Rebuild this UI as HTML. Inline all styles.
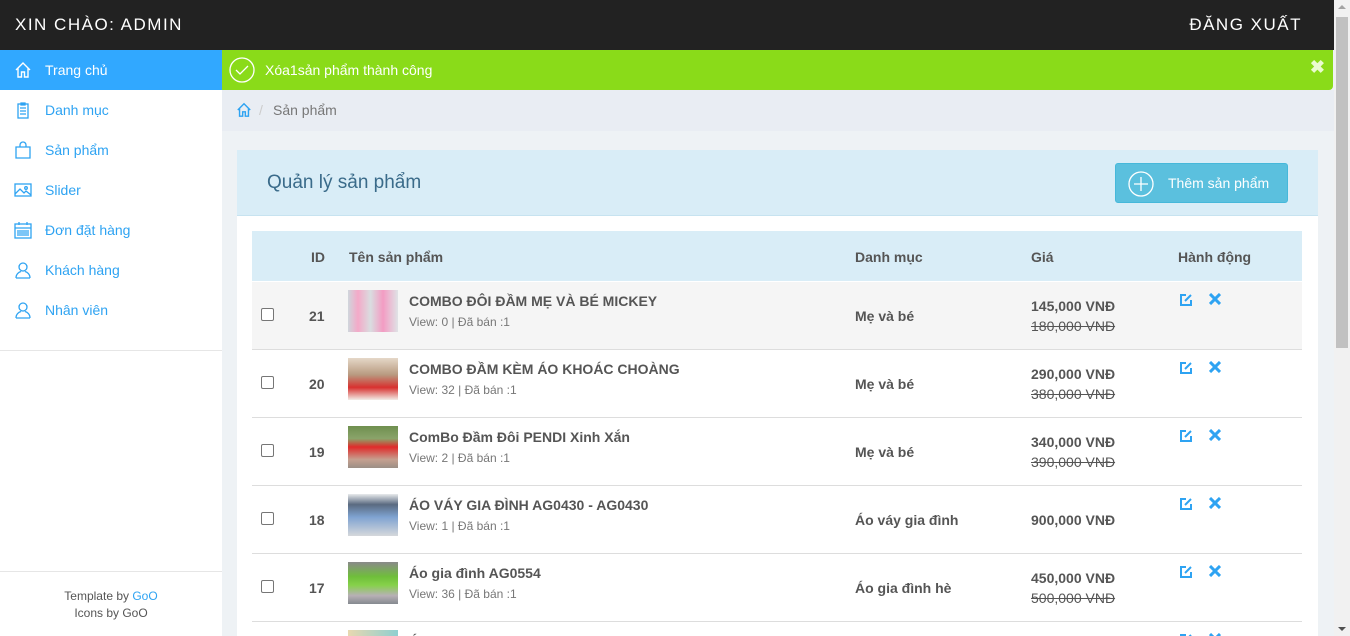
<!DOCTYPE html>
<html style="width:1350px;height:636px;overflow:hidden"><head><meta charset="utf-8">
<style>
*{box-sizing:border-box;margin:0;padding:0}
body{width:1350px;height:636px;overflow:hidden;font-family:"Liberation Sans",Arial,sans-serif;background:#eef2f5;position:relative;color:#555}
.top{position:absolute;left:0;top:0;width:1334px;height:50px;background:#222;color:#fff;font-size:17px;letter-spacing:1.5px}
.top .l{position:absolute;left:15px;top:15px}
.top .r{position:absolute;right:32px;top:15px}
.side{position:absolute;left:0;top:50px;width:222px;height:586px;background:#fff}
.side .it{height:40px;display:flex;align-items:center;padding-left:45px;color:#2ea3f2;font-size:14px;position:relative}
.side .it.act{background:#31a8ff;color:#fff}
.side .it svg{position:absolute;left:14px;top:11px}
.side .div{position:absolute;top:300px;left:0;width:222px;border-top:1px solid #e6e6e6}
.side .foot{position:absolute;top:521px;left:0;width:222px;border-top:1px solid #e6e6e6;text-align:center;font-size:12px;color:#555;padding-top:16px;line-height:17px}
.alert{position:absolute;left:222px;top:50px;width:1111px;height:40px;background:#8adb19;color:#fff;font-size:14px;border-radius:0 0 4px 0}
.bc{position:absolute;left:222px;top:90px;width:1112px;height:41px;background:#e9edf3;font-size:14px;color:#777}
.panel{position:absolute;left:237px;top:150px;width:1081px;height:486px;background:#fff}
.ph{height:66px;background:#d9edf7;border-bottom:1px solid #c7e3f0;position:relative}
.ph .t{position:absolute;left:30px;top:22px;font-size:19px;color:#3a6b8a}
.btn{position:absolute;left:878px;top:13px;width:173px;height:40px;background:#5bc0de;border:1px solid #46b8da;border-radius:3px;color:#fff;font-size:14px}
.th{position:absolute;left:252px;top:231px;width:1050px;height:50px;background:#d9edf7;font-weight:bold;font-size:14px;color:#555}
.row{position:absolute;left:252px;width:1050px;height:68px;border-bottom:1px solid #ddd;overflow:hidden}
.row .cb{position:absolute;left:9px;top:26px;width:13px;height:13px;border:1px solid #767676;border-radius:2px;background:#fff}
.row .id{position:absolute;left:57px;top:26px;font-weight:bold;font-size:14px}
.row .img{position:absolute;left:96px;top:8px;width:50px;height:42px}
.row .nm{position:absolute;left:157px;top:11px;font-weight:bold;font-size:14px}
.row .vw{position:absolute;left:157px;top:33px;font-size:12px;color:#777}
.row .cat{position:absolute;left:603px;top:26px;font-weight:bold;font-size:14px}
.row .p1{position:absolute;left:779px;top:16px;font-weight:bold;font-size:14px}
.row .p2{position:absolute;left:779px;top:36px;font-size:14px;text-decoration:line-through}
.row .p0{position:absolute;left:779px;top:26px;font-weight:bold;font-size:14px}
.row .ed{position:absolute;left:927px;top:11px}
.row .x{position:absolute;left:957px;top:11px}
.sb{position:absolute;left:1334px;top:0;width:16px;height:636px;background:#f1f1f1}
.sb .th2{position:absolute;left:2px;top:17px;width:12px;height:331px;background:#c1c1c1}
</style></head><body>
<div class="top"><span class="l">XIN CHÀO: ADMIN</span><span class="r">ĐĂNG XUẤT</span></div>
<div class="side">
<div class="it act"><svg width="18" height="18" viewBox="0 0 18 18" fill="none" stroke="#fff" stroke-width="1.4"><path d="M2 9L9 2l7 7M4 7.5V16h3.5v-5h3v5H14V7.5"/></svg>Trang chủ</div>
<div class="it"><svg width="18" height="18" viewBox="0 0 18 18" fill="none" stroke="#2ea3f2" stroke-width="1.3"><rect x="4" y="3" width="10" height="14"/><path d="M7 2h4v2H7zM6 7h6M6 10h6M6 13h6"/></svg>Danh mục</div>
<div class="it"><svg width="18" height="18" viewBox="0 0 18 18" fill="none" stroke="#2ea3f2" stroke-width="1.3"><path d="M2 6h14v11H2zM6 6V4a3 3 0 0 1 6 0v2"/></svg>Sản phẩm</div>
<div class="it"><svg width="18" height="18" viewBox="0 0 18 18" fill="none" stroke="#2ea3f2" stroke-width="1.3"><rect x="1" y="3" width="16" height="12"/><path d="M1 13l5-5 4 4 2-2 5 4"/><circle cx="12" cy="7" r="1.3"/></svg>Slider</div>
<div class="it"><svg width="18" height="18" viewBox="0 0 18 18" fill="none" stroke="#2ea3f2" stroke-width="1.3"><rect x="1" y="3" width="16" height="14"/><path d="M1 7h16M3 10h12M3 12h12M3 14h12M5 1v3M13 1v3"/></svg>Đơn đặt hàng</div>
<div class="it"><svg width="18" height="18" viewBox="0 0 18 18" fill="none" stroke="#2ea3f2" stroke-width="1.3"><circle cx="9" cy="6" r="4"/><path d="M2 17c0-4 3-6 5-6.5M16 17c0-4-3-6-5-6.5M2 17h14"/></svg>Khách hàng</div>
<div class="it"><svg width="18" height="18" viewBox="0 0 18 18" fill="none" stroke="#2ea3f2" stroke-width="1.3"><circle cx="9" cy="6" r="4"/><path d="M2 17c0-4 3-6 5-6.5M16 17c0-4-3-6-5-6.5M2 17h14"/></svg>Nhân viên</div>
<div class="div"></div>
<div class="foot">Template by <span style="color:#2ea3f2">GoO</span><br>Icons by GoO</div>
</div>
<div class="alert"><svg style="position:absolute;left:7px;top:7px" width="26" height="26" viewBox="0 0 26 26" fill="none" stroke="#fff" stroke-width="1.3"><circle cx="13" cy="13" r="12"/><path d="M7 13l4 4 8-8"/></svg><span style="position:absolute;left:43px;top:12px">Xóa1sản phẩm thành công</span><span style="position:absolute;right:8px;top:7px;font-size:18px;font-weight:bold;color:#eafbd0">✖</span></div>
<div class="bc"><svg style="position:absolute;left:14px;top:12px" width="16" height="16" viewBox="0 0 18 18" fill="none" stroke="#2ea3f2" stroke-width="1.6"><path d="M2 9L9 2l7 7M4 7.5V16h3.5v-5h3v5H14V7.5"/></svg><span style="position:absolute;left:37px;top:12px;color:#ccc">/</span><span style="position:absolute;left:51px;top:12px">Sản phẩm</span></div>
<div class="panel"><div class="ph"><span class="t">Quản lý sản phẩm</span>
<div class="btn"><svg style="position:absolute;left:12px;top:7px" width="26" height="26" viewBox="0 0 26 26" fill="none" stroke="#fff" stroke-width="1.3"><circle cx="13" cy="13" r="12"/><path d="M13 6v14M6 13h14"/></svg><span style="position:absolute;left:52px;top:11px">Thêm sản phẩm</span></div></div></div>
<div class="th"><span style="position:absolute;left:59px;top:18px">ID</span><span style="position:absolute;left:97px;top:18px">Tên sản phẩm</span><span style="position:absolute;left:603px;top:18px">Danh mục</span><span style="position:absolute;left:779px;top:18px">Giá</span><span style="position:absolute;left:926px;top:18px">Hành động</span></div>

<div class="row" style="top:282px;background:#f5f5f5"><div class="cb"></div><div class="id">21</div><div class="img" style="background:linear-gradient(90deg,#cfd6dc,#f4a9c8 20%,#d9dde0 45%,#f39cc3 70%,#dfe3e6)"></div><div class="nm">COMBO ĐÔI ĐẦM MẸ VÀ BÉ MICKEY</div><div class="vw">View: 0 | Đã bán :1</div><div class="cat">Mẹ và bé</div><div class="p1">145,000 VNĐ</div><div class="p2">180,000 VNĐ</div>
<svg class="ed" width="14" height="14" viewBox="0 0 14 14" fill="none" stroke="#2ea3f2" stroke-width="2"><path d="M7 2H2v10h10V7M6 8l6-6"/></svg><svg class="x" width="12" height="12" viewBox="0 0 12 12" stroke="#2ea3f2" stroke-width="3"><path d="M1 1l10 10M11 1L1 11"/></svg></div>

<div class="row" style="top:350px"><div class="cb"></div><div class="id">20</div><div class="img" style="background:linear-gradient(180deg,#e5d8c8,#b89a80 40%,#d8312f 70%,#f2ede8)"></div><div class="nm">COMBO ĐẦM KÈM ÁO KHOÁC CHOÀNG</div><div class="vw">View: 32 | Đã bán :1</div><div class="cat">Mẹ và bé</div><div class="p1">290,000 VNĐ</div><div class="p2">380,000 VNĐ</div>
<svg class="ed" width="14" height="14" viewBox="0 0 14 14" fill="none" stroke="#2ea3f2" stroke-width="2"><path d="M7 2H2v10h10V7M6 8l6-6"/></svg><svg class="x" width="12" height="12" viewBox="0 0 12 12" stroke="#2ea3f2" stroke-width="3"><path d="M1 1l10 10M11 1L1 11"/></svg></div>

<div class="row" style="top:418px"><div class="cb"></div><div class="id">19</div><div class="img" style="background:linear-gradient(180deg,#6f8f4f,#8aa46a 30%,#e02a2a 50%,#c5a090 80%,#9c8f86)"></div><div class="nm">ComBo Đầm Đôi PENDI Xinh Xắn</div><div class="vw">View: 2 | Đã bán :1</div><div class="cat">Mẹ và bé</div><div class="p1">340,000 VNĐ</div><div class="p2">390,000 VNĐ</div>
<svg class="ed" width="14" height="14" viewBox="0 0 14 14" fill="none" stroke="#2ea3f2" stroke-width="2"><path d="M7 2H2v10h10V7M6 8l6-6"/></svg><svg class="x" width="12" height="12" viewBox="0 0 12 12" stroke="#2ea3f2" stroke-width="3"><path d="M1 1l10 10M11 1L1 11"/></svg></div>

<div class="row" style="top:486px"><div class="cb"></div><div class="id">18</div><div class="img" style="background:linear-gradient(180deg,#e8eaec,#5a6a80 25%,#7fa3d1 55%,#d5d8db)"></div><div class="nm">ÁO VÁY GIA ĐÌNH AG0430 - AG0430</div><div class="vw">View: 1 | Đã bán :1</div><div class="cat">Áo váy gia đình</div><div class="p0">900,000 VNĐ</div>
<svg class="ed" width="14" height="14" viewBox="0 0 14 14" fill="none" stroke="#2ea3f2" stroke-width="2"><path d="M7 2H2v10h10V7M6 8l6-6"/></svg><svg class="x" width="12" height="12" viewBox="0 0 12 12" stroke="#2ea3f2" stroke-width="3"><path d="M1 1l10 10M11 1L1 11"/></svg></div>

<div class="row" style="top:554px"><div class="cb"></div><div class="id">17</div><div class="img" style="background:linear-gradient(180deg,#8a8a8a,#6fbf3a 35%,#86d14a 55%,#b7b0b5 80%,#858a90)"></div><div class="nm">Áo gia đình AG0554</div><div class="vw">View: 36 | Đã bán :1</div><div class="cat">Áo gia đình hè</div><div class="p1">450,000 VNĐ</div><div class="p2">500,000 VNĐ</div>
<svg class="ed" width="14" height="14" viewBox="0 0 14 14" fill="none" stroke="#2ea3f2" stroke-width="2"><path d="M7 2H2v10h10V7M6 8l6-6"/></svg><svg class="x" width="12" height="12" viewBox="0 0 12 12" stroke="#2ea3f2" stroke-width="3"><path d="M1 1l10 10M11 1L1 11"/></svg></div>

<div class="row" style="top:622px;height:14px;border:none"><div class="img" style="background:linear-gradient(90deg,#e8d8b0,#8fcfd0)"></div><div class="nm">Áo gia đình AG0560</div>
<svg class="ed" width="14" height="14" viewBox="0 0 14 14" fill="none" stroke="#2ea3f2" stroke-width="2"><path d="M7 2H2v10h10V7M6 8l6-6"/></svg><svg class="x" width="12" height="12" viewBox="0 0 12 12" stroke="#2ea3f2" stroke-width="3"><path d="M1 1l10 10M11 1L1 11"/></svg></div>

<div class="sb"><div class="th2"></div><div style="position:absolute;left:4px;top:5px;border:4px solid transparent;border-bottom:4px solid #a3a3a3;border-top:none"></div><div style="position:absolute;left:4px;top:627px;border:4px solid transparent;border-top:4px solid #505050;border-bottom:none"></div></div>
</body></html>
